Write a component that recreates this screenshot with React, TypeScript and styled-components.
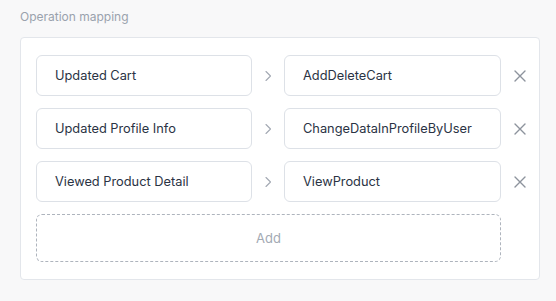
import React from "react";
import styled, { createGlobalStyle } from "styled-components";

const mappings = [
  { from: "Updated Cart", to: "AddDeleteCart" },
  { from: "Updated Profile Info", to: "ChangeDataInProfileByUser" },
  { from: "Viewed Product Detail", to: "ViewProduct" },
];

function Chevron() {
  return (
    <svg width="8" height="12" viewBox="0 0 8 12" fill="none">
      <path d="M2 1.5l4.5 4.5-4.5 4.5" stroke="#a3a9b3" strokeWidth="1.1" strokeLinecap="round" strokeLinejoin="round" />
    </svg>
  );
}

function Cross() {
  return (
    <svg width="12" height="12" viewBox="0 0 12 12" fill="none">
      <path d="M1 1l10 10M11 1L1 11" stroke="#8d939d" strokeWidth="1.4" strokeLinecap="round" />
    </svg>
  );
}

export default function App() {
  return (
    <>
      <GlobalStyle />
      <Page>
        <SectionLabel>Operation mapping</SectionLabel>
        <Panel>
          {mappings.map((m) => (
            <React.Fragment key={m.from}>
              <Field>{m.from}</Field>
              <Arrow>
                <Chevron />
              </Arrow>
              <Field>{m.to}</Field>
              <RemoveButton aria-label="Remove">
                <Cross />
              </RemoveButton>
            </React.Fragment>
          ))}
          <AddButton>Add</AddButton>
        </Panel>
      </Page>
    </>
  );
}

const GlobalStyle = createGlobalStyle`
  html, body {
    margin: 0;
    padding: 0;
    background: #f8f8f9;
    font-family: Inter, "Noto Sans", sans-serif;
  }
`;

const Page = styled.div`
  padding: 9px 16px 0 20px;
`;

const SectionLabel = styled.div`
  font-size: 12px;
  line-height: 16px;
  color: #9aa2ad;
  margin-bottom: 12px;
`;

const Panel = styled.div`
  background: #fff;
  border: 1px solid #e3e6eb;
  border-radius: 4px;
  padding: 17px 0 17px 15px;
  display: grid;
  grid-template-columns: 216px 32px 217px 1fr;
  row-gap: 12px;
  align-items: center;
`;

const Field = styled.div`
  height: 41px;
  box-sizing: border-box;
  border: 1px solid #dde1e7;
  border-radius: 6px;
  padding: 0 18px;
  display: flex;
  align-items: center;
  font-size: 12.8px;
  color: #2a3344;
`;

const Arrow = styled.div`
  display: flex;
  justify-content: center;
  align-items: center;
`;

const RemoveButton = styled.button`
  border: none;
  background: none;
  padding: 0;
  display: flex;
  justify-content: center;
  align-items: center;
  cursor: pointer;
`;

const AddButton = styled.button`
  grid-column: 1 / 4;
  height: 48px;
  border: 1px dashed #aeb4bd;
  border-radius: 6px;
  background: #fff;
  font-family: inherit;
  font-size: 13px;
  color: #a3aab4;
  cursor: pointer;
`;
